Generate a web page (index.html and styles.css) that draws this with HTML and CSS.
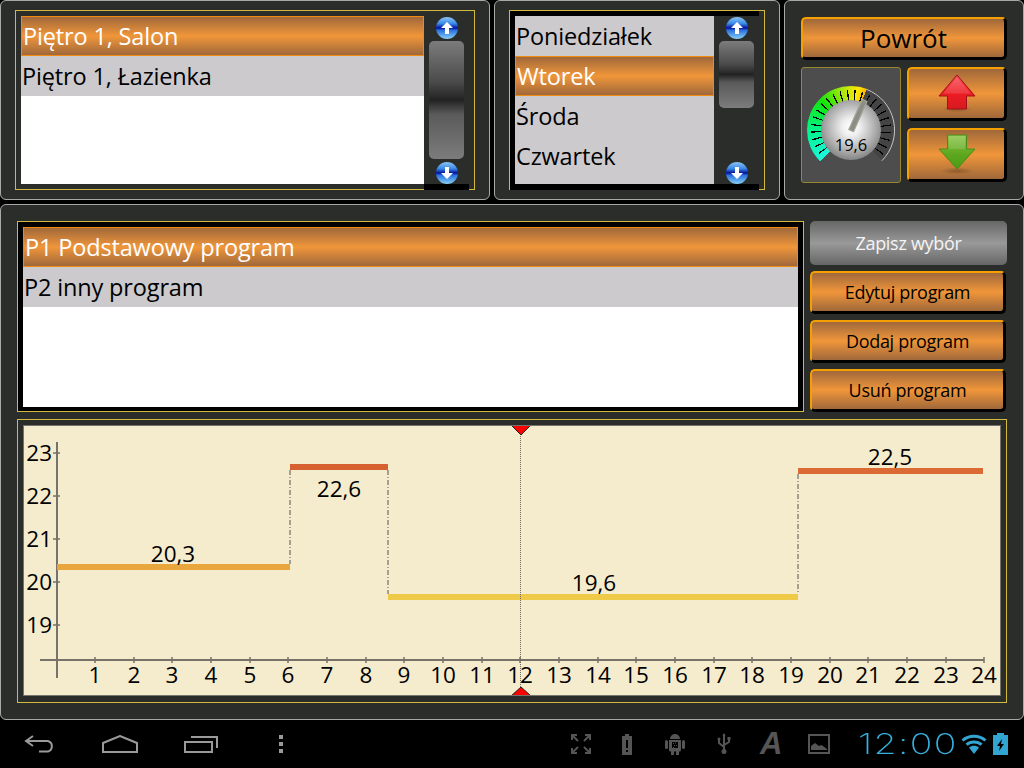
FILE: index.html
```html
<!doctype html>
<html lang="pl">
  <head>
    <meta charset="UTF-8" />
    <meta name="viewport" content="width=device-width, initial-scale=1.0" />
    <title>Program ogrzewania</title>
    <link rel="stylesheet" href="styles.css">
  </head>

  <body>
    <svg class="defs" width="0" height="0">
      <defs>
        <linearGradient id="redArrow" x1="0" y1="0" x2="0" y2="1">
          <stop offset="0" stop-color="#f8525a" />
          <stop offset="0.5" stop-color="#ee1c24" />
          <stop offset="1" stop-color="#d81a20" />
        </linearGradient>
        <linearGradient id="greenArrow" x1="0" y1="0" x2="0" y2="1">
          <stop offset="0" stop-color="#8fc850" />
          <stop offset="0.55" stop-color="#5fa81e" />
          <stop offset="1" stop-color="#4a9a14" />
        </linearGradient>
        <radialGradient id="shadow">
          <stop offset="0" stop-color="#5a3a1c" stop-opacity="0.45" />
          <stop offset="1" stop-color="#5a3a1c" stop-opacity="0" />
        </radialGradient>
      </defs>
    </svg>

    <div class="top">
      <section class="panel panel-rooms">
        <div class="frame">
          <ul class="list list-rooms">
            <li class="row row-on">Piętro 1, Salon</li>
            <li class="row">Piętro 1, Łazienka</li>
          </ul>
          <div class="scroll">
            <span class="scroll-btn"><svg viewBox="0 0 14 14" width="14" height="14"><path d="M7 1 13 7H9v6H5V7H1z" fill="#fff" /></svg></span>
            <span class="thumb thumb-long"></span>
            <span class="scroll-btn scroll-btn-end"><svg viewBox="0 0 14 14" width="14" height="14"><path d="M7 13 13 7H9V1H5v6H1z" fill="#fff" /></svg></span>
          </div>
        </div>
      </section>

      <section class="panel panel-days">
        <div class="frame frame-dark">
          <div class="frame-inner">
            <ul class="list list-days">
              <li class="row">Poniedziałek</li>
              <li class="row row-on">Wtorek</li>
              <li class="row">Środa</li>
              <li class="row">Czwartek</li>
            </ul>
            <div class="scroll">
              <span class="scroll-btn"><svg viewBox="0 0 14 14" width="14" height="14"><path d="M7 1 13 7H9v6H5V7H1z" fill="#fff" /></svg></span>
              <span class="thumb thumb-short"></span>
              <span class="scroll-btn scroll-btn-end"><svg viewBox="0 0 14 14" width="14" height="14"><path d="M7 13 13 7H9V1H5v6H1z" fill="#fff" /></svg></span>
            </div>
          </div>
        </div>
      </section>

      <section class="panel panel-side">
        <button class="btn btn-back">Powrót</button>
        <div class="side-grid">
          <div class="gauge">
            <div class="dial">
              <div class="dial-ring">
                <div class="dial-colors"></div>
                <div class="dial-ticks"></div>
              </div>
              <svg class="dial-edge" viewBox="0 0 88 88" width="88" height="88"><path d="M59.6 3.4A43.5 43.5 0 0 1 74.8 74.8" fill="none" stroke="#c8c8c8" stroke-width="1" /></svg>
              <div class="hub">19,6</div>
              <div class="needle"></div>
            </div>
          </div>
          <div class="arrows">
            <button class="btn btn-arrow">
              <svg viewBox="0 0 40 42" width="40" height="42">
                <ellipse cx="20" cy="36" rx="15" ry="3.500" fill="url(#shadow)" />
                <path d="M20 2 38 23H29.500V36H10.500V23H2z" fill="url(#redArrow)" stroke="#a01018" stroke-width="1" />
                <path d="M20 4.500 34 20.500H6z" fill="#fff" opacity="0.14" />
              </svg>
            </button>
            <button class="btn btn-arrow">
              <svg viewBox="0 0 40 42" width="40" height="42">
                <ellipse cx="20" cy="37" rx="17" ry="3.500" fill="url(#shadow)" />
                <path d="M10.500 1H29.500V15H38L20 35 2 15H10.500z" fill="url(#greenArrow)" stroke="#4c8a18" stroke-width="1" />
                <path d="M12 2H28V15H12z" fill="#fff" opacity="0.12" />
              </svg>
            </button>
          </div>
        </div>
      </section>
    </div>

    <main class="panel main">
      <div class="programs">
        <div class="frame frame-programs">
          <ul class="list list-programs">
            <li class="row row-on">P1 Podstawowy program</li>
            <li class="row">P2 inny program</li>
          </ul>
        </div>
        <div class="actions">
          <button class="btn-save">Zapisz wybór</button>
          <button class="btn btn-action">Edytuj program</button>
          <button class="btn btn-action">Dodaj program</button>
          <button class="btn btn-action">Usuń program</button>
        </div>
      </div>

      <div class="frame frame-chart">
        <svg class="chart" viewBox="23 425 978 271" width="978" height="271">
          <!-- axes -->
          <path class="axis" d="M57 442V678M40 660H984" />
          <path class="tick" d="M53 453H60M53 496H60M53 539H60M53 582H60M53 625H60M95 657v6M134 657v6M172 657v6M211 657v6M250 657v6M288 657v6M327 657v6M366 657v6M404 657v6M443 657v6M482 657v6M520 657v6M559 657v6M598 657v6M636 657v6M675 657v6M714 657v6M752 657v6M791 657v6M830 657v6M868 657v6M907 657v6M946 657v6M984 657v6" />

          <g class="y-labels">
            <text x="52" y="461">23</text>
            <text x="52" y="504">22</text>
            <text x="52" y="547">21</text>
            <text x="52" y="590">20</text>
            <text x="52" y="633">19</text>
          </g>
          <g class="x-labels">
            <text x="95" y="683">1</text>
            <text x="134" y="683">2</text>
            <text x="172" y="683">3</text>
            <text x="211" y="683">4</text>
            <text x="250" y="683">5</text>
            <text x="288" y="683">6</text>
            <text x="327" y="683">7</text>
            <text x="366" y="683">8</text>
            <text x="404" y="683">9</text>
            <text x="443" y="683">10</text>
            <text x="482" y="683">11</text>
            <text x="520" y="683">12</text>
            <text x="559" y="683">13</text>
            <text x="598" y="683">14</text>
            <text x="636" y="683">15</text>
            <text x="675" y="683">16</text>
            <text x="714" y="683">17</text>
            <text x="752" y="683">18</text>
            <text x="791" y="683">19</text>
            <text x="830" y="683">20</text>
            <text x="868" y="683">21</text>
            <text x="907" y="683">22</text>
            <text x="946" y="683">23</text>
            <text x="984" y="683">24</text>
          </g>

          <!-- program steps -->
          <path class="step" d="M290 470V564M388 470V594M798 474V594" />
          <rect x="57" y="564" width="233" height="6" fill="#e8a63c" />
          <rect x="290" y="464" width="98" height="6" fill="#d6602f" />
          <rect x="388" y="594" width="410" height="6" fill="#eeca48" />
          <rect x="798" y="468" width="185" height="6" fill="#dc6a34" />
          <g class="values">
            <text x="173" y="562">20,3</text>
            <text x="339" y="497">22,6</text>
            <text x="594" y="591">19,6</text>
            <text x="890" y="465">22,5</text>
          </g>

          <!-- current time -->
          <path class="now" d="M520.500 434V688" />
          <path class="marker" d="M511 425H531L521 435z" />
          <path class="marker" d="M511 696H531L521 687z" />
        </svg>
      </div>
    </main>

    <nav class="bar">
      <div class="bar-left">
        <svg class="nav-icon" viewBox="0 0 32 18" width="32" height="18"><path d="M9 1 2 6l7 5M2 6H24a5.500 5.500 0 0 1 0 10.500H15" /></svg>
        <svg class="nav-icon" viewBox="0 0 36 18" width="36" height="18"><path d="M1 8 18 1l17 7V17H1z" /></svg>
        <svg class="nav-icon" viewBox="0 0 34 18" width="34" height="18"><path d="M1 7H28V17H1zM7 2H33V13" /></svg>
        <svg class="nav-dots" viewBox="0 0 6 18" width="6" height="18"><path d="M1 0h4v4H1zM1 7h4v4H1zM1 14h4v4H1z" /></svg>
      </div>
      <div class="bar-right">
        <svg class="st st-expand" viewBox="0 0 20 20" width="20" height="20"><path d="M1 6V1h5M1 1l6 6M14 1h5v5M19 1l-6 6M1 14v5h5M1 19l6-6M14 19h5v-5M19 19l-6-6" /></svg>
        <svg class="st-fill st-batt" viewBox="0 0 10 21" width="10" height="21"><path fill-rule="evenodd" d="M3 0h4v2h3v19H0V2h3zM4 6v8h2V6zM4 16v2h2v-2z" /></svg>
        <svg class="st-fill st-droid" viewBox="0 0 20 22" width="20" height="22">
          <path d="M5 6a5 5 0 0 1 10 0zM6 1.500 5 0M14 1.500 15 0" />
          <path fill-rule="evenodd" d="M4 7h12v10a1.500 1.500 0 0 1-1.500 1.500H14V22h-3v-3.500H9V22H6v-3.500H5.500A1.500 1.500 0 0 1 4 17zM7 9v6h6V9z" />
          <rect y="7" width="3" height="9" rx="1.500" />
          <rect x="17" y="7" width="3" height="9" rx="1.500" />
          <path d="M8 10h1v1H8zM10 9.500h1v1h-1zM9 12h1v1H9zM11 12h1v1h-1zM8 14h1v1H8z" />
        </svg>
        <svg class="st st-usb" viewBox="0 0 14 22" width="14" height="22"><path d="M7 1V17M7 14 2 10V7M7 12l5-3V6" /><circle class="st-dot" cx="7" cy="18.500" r="2.500" /><circle class="st-dot" cx="2" cy="6" r="1.500" /><path class="st-dot" d="M10.500 4h3v3h-3zM5.500 3 7 0l1.500 3z" /></svg>
        <span class="st-a">A</span>
        <svg class="st-fill st-img" viewBox="0 0 22 20" width="22" height="20"><path fill-rule="evenodd" d="M0 0H22V20H0zM2 2V18H20V2z" /><path d="M3 16V12L7 9l4 3 2-1 2 1 4 3v1z" /></svg>
        <span class="clock">12:00</span>
        <svg class="st-wifi" viewBox="0 0 26 20" width="26" height="20">
          <path class="wifi-arc" d="M1.500 6.500C7.800 .9 18.200 .9 24.500 6.500" />
          <path class="wifi-arc" d="M5.500 10.700C9.600 7 16.400 7 20.500 10.700" />
          <path class="wifi-fan" d="M13 20 8 13.500C11 11.300 15 11.300 18 13.500z" />
        </svg>
        <svg class="blue st-charge" viewBox="0 0 15 22" width="15" height="22"><path fill-rule="evenodd" d="M4 0h7v2h4v20H0V2h4zM9 6 4 13h3l-1 5 5-7H8z" /></svg>
      </div>
    </nav>
  </body>
</html>
```
FILE: styles.css
```css
* {
  box-sizing: border-box;
}

body {
  margin: 0;
  width: 1024px;
  height: 768px;
  overflow: hidden;
  background-color: black;
  font-family: "Open Sans", sans-serif;
  color: black;
}

ul {
  margin: 0;
  padding: 0;
  list-style: none;
}

button {
  font-family: inherit;
  padding: 0;
}

.defs {
  position: absolute;
}

.top {
  display: flex;
  gap: 4px;
  height: 200px;
}

.panel {
  background-color: #2b2d2a;
  border: 1px solid #a8a8a8;
  border-radius: 6px;
}

.panel-rooms {
  width: 490px;
  padding: 9px 14px;
}

.panel-days {
  width: 286px;
  padding: 9px 14px;
}

.panel-side {
  width: 240px;
  padding: 16px;
  display: flex;
  flex-direction: column;
  gap: 7px;
}

.frame {
  border: 1px solid #d2ba3e;
}

.panel-rooms .frame {
  height: 180px;
  padding: 5px 5px 0 5px;
  display: flex;
  align-items: flex-start;
}

.frame-dark {
  height: 180px;
  padding-right: 5px;
}

.frame-inner {
  height: 179px;
  padding: 5px 0 0 5px;
  background-color: black;
  display: flex;
  align-items: flex-start;
}

.list {
  background-color: white;
  font-size: 23.5px;
  letter-spacing: -0.15px;
}

.list-rooms {
  width: 403px;
  height: 168px;
}

.list-days {
  width: 199px;
  height: 168px;
  background-color: #cccacd;
}

.row {
  height: 40px;
  padding-left: 1px;
  line-height: 40px;
  background-color: #cccacd;
  white-space: nowrap;
}

.row-on {
  color: white;
  padding-left: 1px;
  line-height: 38px;
  border: 1px solid #f08a10;
  background: linear-gradient(#a0683a, #f0963a 50%, #a0683a);
}

.scroll {
  width: 45px;
  height: 174px;
  background-color: #2b2d2a;
  border-bottom: 6px solid black;
  display: flex;
  flex-direction: column;
  align-items: center;
  padding-top: 1px;
}

.scroll-btn {
  width: 22px;
  height: 22px;
  flex: none;
  border-radius: 50%;
  display: flex;
  align-items: center;
  justify-content: center;
  background: linear-gradient(#8cc4f4, #3a8ae8 30%, #04109a 50%, #2a70e0 60%, #86d0f6);
  margin-left: 1px;
}

.scroll-btn-end {
  margin-top: auto;
}

.thumb {
  flex: none;
  width: 35px;
  margin-top: 2px;
  border-radius: 5px;
  background: linear-gradient(#7c7c7c, #4a4a4a 35%, #222 50%, #5a5a5a 62%, #7c7c7c);
}

.thumb-long {
  height: 118px;
}

.thumb-short {
  height: 67px;
}

.btn {
  display: block;
  border-style: solid;
  border-color: #f5a000 black black #f5a000;
  border-width: 2px 3px 3px 2px;
  border-radius: 5px;
  background: linear-gradient(#a0683a, #f0963a 50%, #a0683a);
  color: black;
}

.btn-back {
  height: 43px;
  width: 206px;
  font-size: 26px;
}

.side-grid {
  display: flex;
  gap: 6px;
}

.gauge {
  width: 100px;
  height: 116px;
  padding: 18px 0 0 5px;
  background-color: #4d4d4d;
  border: 1px solid #9a8630;
  border-radius: 3px;
}

.dial {
  position: relative;
  width: 88px;
  height: 88px;
}

.dial-ring {
  position: absolute;
  inset: 0;
  -webkit-mask-image: conic-gradient(from 225deg, black 0 270deg, transparent 0);
  mask-image: conic-gradient(from 225deg, black 0 270deg, transparent 0);
}

.dial-colors {
  position: absolute;
  inset: 0;
  border-radius: 50%;
  background: conic-gradient(from 225deg, #1cf5dc 0, #00f58a 45deg, #14e40a 90deg, #c8e810 130deg, #ffe800 145deg, #ffb400 156deg, #444 156deg 270deg);
}

.dial-ticks {
  position: absolute;
  inset: 0;
  border-radius: 50%;
  background: repeating-conic-gradient(from 224deg, transparent 0 9deg, black 9deg 11deg);
  -webkit-mask-image: radial-gradient(circle, transparent 28px, black 28px 40px, transparent 40px);
  mask-image: radial-gradient(circle, transparent 28px, black 28px 40px, transparent 40px);
}

.dial-edge {
  position: absolute;
  inset: 0;
}

.hub {
  position: absolute;
  left: 14px;
  top: 14px;
  width: 60px;
  height: 60px;
  padding-top: 33px;
  border-radius: 50%;
  background: radial-gradient(circle 34px at 50% 45%, white 0, #f0f0f0 25%, #a8a8a8 75%, #808080 100%);
  font-size: 16.5px;
  line-height: 24px;
  text-align: center;
}

.needle {
  position: absolute;
  left: 41px;
  top: 11px;
  width: 6px;
  height: 34px;
  background-color: #8c8e84;
  border: 1px solid #a8aaa0;
  transform: rotate(24deg);
  transform-origin: 50% 100%;
}

.arrows {
  display: flex;
  flex-direction: column;
  gap: 7px;
}

.btn-arrow {
  width: 100px;
  height: 54px;
  display: flex;
  align-items: center;
  justify-content: center;
}

.main {
  display: block;
  height: 516px;
  margin-top: 4px;
  padding: 16px;
}

.programs {
  display: flex;
  gap: 6px;
  height: 191px;
  margin-bottom: 7px;
}

.frame-programs {
  width: 787px;
  padding: 5px 5px 4px 5px;
  background-color: black;
}

.list-programs {
  height: 100%;
}

.actions {
  width: 197px;
  display: flex;
  flex-direction: column;
  justify-content: space-between;
}

.btn-save {
  height: 44px;
  border: 0;
  border-radius: 5px;
  background: linear-gradient(#666, #999 50%, #666);
  color: #f4f4f4;
  font-size: 18px;
  letter-spacing: -0.3px;
}

.btn-action {
  width: 196px;
  height: 43px;
  font-size: 18px;
  letter-spacing: -0.3px;
}

.frame-chart {
  width: 990px;
  height: 284px;
  padding: 5px;
}

.chart {
  display: block;
  background-color: #f5ebcd;
  outline: 1px solid #77736a;
  outline-offset: -1px;
}

.chart text {
  font-size: 22.5px;
  fill: black;
}

.axis {
  fill: none;
  stroke: #77736a;
  stroke-width: 2;
}

.tick {
  fill: none;
  stroke: #77736a;
  stroke-width: 1.500;
}

.y-labels {
  text-anchor: end;
}

.x-labels,
.values {
  text-anchor: middle;
}

.step {
  fill: none;
  stroke: #555;
  stroke-width: 1;
  stroke-dasharray: 5 2 1 2;
}

.now {
  fill: none;
  stroke: #6d6a60;
  stroke-width: 1;
  stroke-dasharray: 1 1;
}

.marker {
  fill: #f00;
  stroke: #222;
  stroke-width: 1;
}

.bar {
  height: 48px;
  display: flex;
  justify-content: space-between;
  align-items: center;
}

.bar-left {
  display: flex;
  align-items: center;
  gap: 46px;
  padding-left: 24px;
}

.nav-icon {
  fill: none;
  stroke: #9a9a9a;
  stroke-width: 2;
}

.nav-dots {
  fill: #9a9a9a;
  margin-left: 14px;
}

.bar-right {
  display: flex;
  align-items: center;
  width: 453px;
  padding-right: 16px;
}

.st {
  fill: none;
  stroke: #555;
  stroke-width: 2;
}

.st .st-dot {
  fill: #555;
  stroke: none;
}

.st-fill {
  fill: #555;
}

.blue {
  fill: #33a5d2;
}

.st-batt {
  margin-left: 31px;
}

.st-droid {
  margin-left: 33px;
}

.st-usb {
  margin-left: 32px;
}

.st-a {
  width: 22px;
  margin-left: 29px;
  font-family: "Liberation Sans", sans-serif;
  font-size: 31px;
  font-weight: bold;
  font-style: italic;
  line-height: 24px;
  color: #555;
}

.st-img {
  margin-left: 26px;
}

.clock {
  width: 98px;
  margin-left: 28px;
  font-family: Inter, sans-serif;
  font-size: 28px;
  font-weight: 200;
  letter-spacing: 1px;
  line-height: 24px;
  color: #36b0de;
  white-space: nowrap;
  transform: scaleX(1.34);
  transform-origin: 0 50%;
}

.st-wifi {
  margin-left: 5px;
}

.wifi-arc {
  fill: none;
  stroke: #33a5d2;
  stroke-width: 3;
}

.wifi-fan {
  fill: #33a5d2;
}

.st-charge {
  margin-left: 6px;
}
```
